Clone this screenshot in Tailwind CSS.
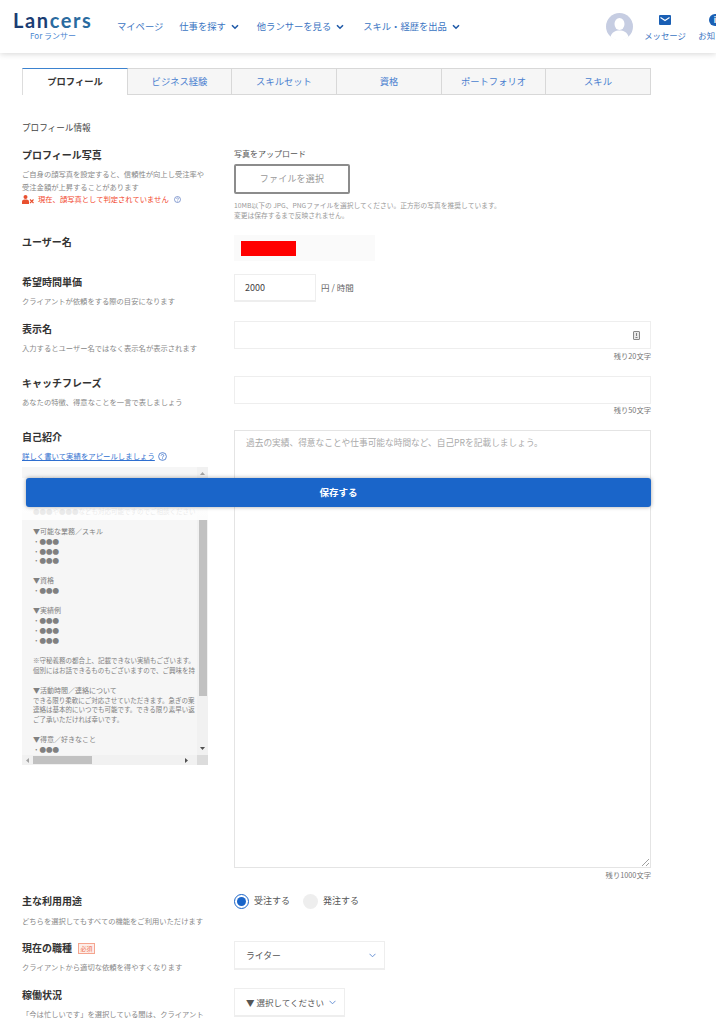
<!DOCTYPE html>
<html lang="ja">
<head>
<meta charset="UTF-8" />
<title>Lancers プロフィール</title>
<script src="https://cdn.jsdelivr.net/npm/@tailwindcss/browser@4"></script>
</head>
<body class="bg-white overflow-hidden font-['Noto_Sans_CJK_JP','Noto_Sans',sans-serif] text-[#333]">
<div class="relative w-[716px] h-[1024px] overflow-hidden">

  <!-- header -->
  <header class="h-[53px] bg-white shadow-[0_1px_6px_rgba(0,0,0,0.16)] flex items-center relative whitespace-nowrap">
    <div class="w-[117px] pl-[13px] flex flex-col items-start shrink-0">
      <div class="font-['Lato'] font-bold text-[20px] leading-[18px] tracking-[1.6px] mt-[-1px]"><span class="text-[#1b3d73]">Lan</span><span class="text-[#2a6b9f]">cers</span></div>
      <div class="text-[8px] leading-[12px] text-[#4a86d0] ml-[17px] mt-[1px]">For ランサー</div>
    </div>
    <nav class="flex items-center text-[9.3px] text-[#3a74c2] h-full">
      <span>マイページ</span>
      <span class="ml-[16px]">仕事を探す</span>
      <svg class="ml-[5px] w-[8px] h-[6px]" viewBox="0 0 8 6" fill="none"><path d="M1 1.2 4 4.2 7 1.2" stroke="#1f5aa8" stroke-width="1.6"/></svg>
      <span class="ml-[18px]">他ランサーを見る</span>
      <svg class="ml-[5px] w-[8px] h-[6px]" viewBox="0 0 8 6" fill="none"><path d="M1 1.2 4 4.2 7 1.2" stroke="#1f5aa8" stroke-width="1.6"/></svg>
      <span class="ml-[19px]">スキル・経歴を出品</span>
      <svg class="ml-[5px] w-[8px] h-[6px]" viewBox="0 0 8 6" fill="none"><path d="M1 1.2 4 4.2 7 1.2" stroke="#1f5aa8" stroke-width="1.6"/></svg>
    </nav>
    <svg class="absolute left-[606px] top-[13px] w-[27px] h-[27px]" viewBox="0 0 27 27">
      <circle cx="13.5" cy="13.5" r="13.5" fill="#c6cde2"/>
      <ellipse cx="13.5" cy="11" rx="5" ry="6" fill="#fff"/>
      <path d="M4.5 24c1-5 5-6.500 9-6.500s8 1.500 9 6.500a13.500 13.500 0 0 1-18 0z" fill="#fff"/>
    </svg>
    <div class="absolute left-[644px] top-[14px] w-[42px] flex flex-col items-center">
      <svg class="w-[12px] h-[10px] mt-[1px]" viewBox="0 0 12 10"><rect width="12" height="10" rx="1" fill="#1a5fb4"/><path d="M1.500 2.500 6 5.500 10.500 2.500" stroke="#fff" fill="none" stroke-width="1.100"/></svg>
      <span class="text-[8.4px] leading-[12px] text-[#3a74c2] mt-[4px]">メッセージ</span>
    </div>
    <div class="absolute left-[697px] top-[14px] w-[36px] flex flex-col items-center">
      <span class="w-[12px] h-[12px] rounded-full bg-[#1a5fb4] text-white text-[8px] leading-[12px] text-center font-bold">i</span>
      <span class="text-[8.4px] leading-[12px] text-[#3a74c2] mt-[3px]">お知らせ</span>
    </div>
  </header>

  <main class="px-[22px] w-[673px]">
    <!-- tabs -->
    <div class="mt-[15px] flex h-[27px] text-[9.300px] text-[#4a7fd0] w-[629px]">
      <div class="w-[106px] border-t border-t-[#3b82cf] border-l border-l-[#ddd] border-r border-r-[#d8d8d8] bg-white text-[#333] font-bold flex items-center justify-center">プロフィール</div>
      <div class="w-[104px] border-y border-r border-[#d8d8d8] bg-[#f6f6f6] flex items-center justify-center">ビジネス経験</div>
      <div class="w-[105px] border-y border-r border-[#d8d8d8] bg-[#f6f6f6] flex items-center justify-center">スキルセット</div>
      <div class="w-[105px] border-y border-r border-[#d8d8d8] bg-[#f6f6f6] flex items-center justify-center">資格</div>
      <div class="w-[104px] border-y border-r border-[#d8d8d8] bg-[#f6f6f6] flex items-center justify-center">ポートフォリオ</div>
      <div class="w-[105px] border-y border-r border-[#d8d8d8] bg-[#f6f6f6] flex items-center justify-center">スキル</div>
    </div>

    <h3 class="mt-[26px] text-[8.600px] leading-[12px] h-[12px] text-[#444]">プロフィール情報</h3>

    <!-- profile photo -->
    <section class="mt-[15px] h-[87px] grid grid-cols-[212px_417px]">
      <div>
        <h4 class="text-[10px] leading-[14px] font-bold">プロフィール写真</h4>
        <p class="mt-[6px] text-[7.300px] leading-[13px] text-[#888]">ご自身の顔写真を設定すると、信頼性が向上し受注率や<br>受注金額が上昇することがあります</p>
        <p class="-mt-[1px] text-[7.300px] leading-[13px] text-[#f2452a] flex items-center">
          <svg class="w-[12px] h-[9px] mr-[4px]" viewBox="0 0 12 9"><circle cx="3.500" cy="2" r="2" fill="#e8502f"/><path d="M0 9V6.500C0 5 1.500 4.500 3.500 4.500S7 5 7 6.500V9z" fill="#e8502f"/><path d="M8 4.500 11.500 8M11.500 4.500 8 8" stroke="#e8502f" stroke-width="1.100"/></svg>
          現在、顔写真として判定されていません
          <svg class="ml-[5px] w-[7px] h-[7px]" viewBox="0 0 7 7"><circle cx="3.500" cy="3.500" r="3" fill="none" stroke="#5a78c0" stroke-width="0.700"/><path d="M2.500 2.800C2.500 1.500 4.600 1.600 4.500 2.800 4.500 3.500 3.500 3.500 3.500 4.500" fill="none" stroke="#5a78c0" stroke-width="0.600"/><circle cx="3.500" cy="5.300" r="0.400" fill="#5a78c0"/></svg>
        </p>
      </div>
      <div>
        <p class="text-[8px] leading-[12px] text-[#555]">写真をアップロード</p>
        <button class="mt-[4px] w-[116px] h-[30px] rounded-[2px] border-2 border-[#8c8c8c] text-[9px] tracking-[0.200px] text-[#999]">ファイルを選択</button>
        <p class="mt-[6px] text-[6.750px] leading-[10px] text-[#999] whitespace-nowrap">10MB以下の JPG、PNGファイルを選択してください。正方形の写真を推奨しています。<br>変更は保存するまで反映されません。</p>
      </div>
    </section>

    <!-- user name -->
    <section class="h-[39px] grid grid-cols-[212px_417px]">
      <h4 class="text-[10px] leading-[14px] font-bold">ユーザー名</h4>
      <div class="w-[141px] h-[26px] bg-[#fafafa] pl-[7px] pt-[6px]"><div class="w-[55px] h-[15px] bg-[#ff0000]"></div></div>
    </section>

    <!-- hourly rate -->
    <section class="h-[47px] grid grid-cols-[212px_417px]">
      <div class="pt-[1px]">
        <h4 class="text-[10px] leading-[14px] font-bold">希望時間単価</h4>
        <p class="mt-[6px] text-[7.300px] leading-[12px] text-[#888]">クライアントが依頼をする際の目安になります</p>
      </div>
      <div class="flex items-start">
        <div class="w-[82px] h-[28px] border border-[#eee] border-b-2 text-[9px] leading-[26px] pl-[10px] text-[#444]">2000</div>
        <span class="ml-[5px] text-[8.500px] leading-[26px] text-[#666]">円 / 時間</span>
      </div>
    </section>

    <!-- display name -->
    <section class="h-[55px] grid grid-cols-[212px_417px]">
      <div class="pt-[1px]">
        <h4 class="text-[10px] leading-[14px] font-bold">表示名</h4>
        <p class="mt-[6px] text-[7.300px] leading-[12px] text-[#888]">入力するとユーザー名ではなく表示名が表示されます</p>
      </div>
      <div>
        <div class="h-[28px] border border-[#eee] flex items-center justify-end pr-[10px]">
          <svg class="w-[7px] h-[9px]" viewBox="0 0 7 9"><rect x="0.500" y="0.500" width="6" height="8" rx="0.500" fill="#e8e8e8" stroke="#888"/><path d="M3.500 2V5M2.500 6.500H4.500" stroke="#666" stroke-width="0.800"/></svg>
        </div>
        <p class="mt-[1px] text-right text-[7.300px] leading-[12px] text-[#777]">残り20文字</p>
      </div>
    </section>

    <!-- catch phrase -->
    <section class="h-[54px] grid grid-cols-[212px_417px]">
      <div>
        <h4 class="text-[10px] leading-[14px] font-bold">キャッチフレーズ</h4>
        <p class="mt-[6px] text-[7.300px] leading-[12px] text-[#888]">あなたの特徴、得意なことを一言で表しましょう</p>
      </div>
      <div>
        <div class="h-[28px] border border-[#eee]"></div>
        <p class="text-right text-[7.300px] leading-[12px] text-[#777]">残り50文字</p>
      </div>
    </section>

    <!-- self introduction -->
    <section class="h-[464px] grid grid-cols-[212px_417px]">
      <div>
        <h4 class="text-[10px] leading-[14px] font-bold">自己紹介</h4>
        <p class="mt-[6px] text-[7.400px] leading-[12px] text-[#2f6fd0] flex items-center"><span class="underline">詳しく書いて実績をアピールしましょう</span>
          <svg class="ml-[3px] w-[9px] h-[9px]" viewBox="0 0 9 9"><circle cx="4.500" cy="4.500" r="3.900" fill="none" stroke="#3a6fc8" stroke-width="0.800"/><path d="M3.200 3.600C3.200 2 5.800 2.100 5.700 3.600 5.600 4.500 4.500 4.500 4.500 5.600" fill="none" stroke="#3a6fc8" stroke-width="0.800"/><circle cx="4.500" cy="6.800" r="0.500" fill="#3a6fc8"/></svg>
        </p>
        <div class="relative mt-[5px] w-[186px] h-[298px] bg-[#f6f6f6] flex flex-col overflow-hidden text-[#808080]">
          <div class="flex-1 flex min-h-0">
            <div class="flex-1 overflow-hidden whitespace-nowrap pl-[11px] pt-[10px] text-[6.500px] leading-[9.930px]">
              <p class="h-[9.930px]">▼自己紹介</p>
              <p class="h-[9.930px]"></p>
              <p class="h-[9.930px]"></p>
              <p>●●●や●●●なども対応可能ですのでご相談ください</p>
              <p class="h-[9.930px]"></p>
              <p class="text-[7px]">▼可能な業務／スキル</p>
              <p>・●●●</p>
              <p>・●●●</p>
              <p>・●●●</p>
              <p class="h-[9.930px]"></p>
              <p class="text-[7px]">▼資格</p>
              <p>・●●●</p>
              <p class="h-[9.930px]"></p>
              <p class="text-[7px]">▼実績例</p>
              <p>・●●●</p>
              <p>・●●●</p>
              <p>・●●●</p>
              <p class="h-[9.930px]"></p>
              <p>※守秘義務の都合上、記載できない実績もございます。</p>
              <p>個別にはお話できるものもございますので、ご興味を持</p>
              <p class="h-[9.930px]"></p>
              <p class="text-[7px]">▼活動時間／連絡について</p>
              <p>できる限り柔軟にご対応させていただきます。急ぎの案</p>
              <p>連絡は基本的にいつでも可能です。できる限り素早い返</p>
              <p>ご了承いただければ幸いです。</p>
              <p class="h-[9.930px]"></p>
              <p class="text-[7px]">▼得意／好きなこと</p>
              <p>・●●●</p>
            </div>
            <div class="w-[11px] shrink-0 bg-[#f1f1f1] flex flex-col items-center">
              <svg class="w-[5px] h-[3px] mt-[5px]" viewBox="0 0 5 3"><path d="M0 3 2.500 0 5 3z" fill="#a3a3a3"/></svg>
              <div class="w-[8px] h-[176px] bg-[#c1c1c1] mt-[45px]"></div>
              <svg class="w-[5px] h-[3px] mt-auto mb-[5px]" viewBox="0 0 5 3"><path d="M0 0 2.500 3 5 0z" fill="#505050"/></svg>
            </div>
          </div>
          <div class="h-[10px] shrink-0 bg-[#f1f1f1] flex items-center text-[0px]">
            <svg class="ml-[4px] w-[3px] h-[5px]" viewBox="0 0 3 5"><path d="M3 0 0 2.500 3 5z" fill="#a3a3a3"/></svg>
            <div class="ml-[4px] w-[59px] h-[8px] bg-[#c1c1c1]"></div>
            <svg class="ml-[93px] w-[3px] h-[5px]" viewBox="0 0 3 5"><path d="M0 0 3 2.500 0 5z" fill="#505050"/></svg>
            <div class="ml-auto w-[11px] h-[10px] bg-[#dcdcdc]"></div>
          </div>
          <!-- fade under the save button -->
          <div class="absolute left-0 top-[11px] w-[186px] h-[42px] bg-gradient-to-b from-white to-white/80"></div>
        </div>
      </div>
      <div>
        <div class="relative h-[438px] border border-[#e4e4e4] pl-[11px] pt-[5px] text-[8.700px] leading-[14px] text-[#aaa]">
          過去の実績、得意なことや仕事可能な時間など、自己PRを記載しましょう。
          <svg class="absolute right-[1px] bottom-[1px] w-[7px] h-[7px]" viewBox="0 0 7 7"><path d="M0 7 7 0M4 7 7 4" stroke="#777" stroke-width="0.700"/></svg>
        </div>
        <p class="mt-[1px] text-right text-[7.300px] leading-[12px] text-[#777]">残り1000文字</p>
      </div>
    </section>

    <!-- usage -->
    <section class="h-[47px] grid grid-cols-[212px_417px]">
      <div>
        <h4 class="text-[10px] leading-[14px] font-bold">主な利用用途</h4>
        <p class="mt-[7px] text-[7.300px] leading-[12px] text-[#888]">どちらを選択してもすべての機能をご利用いただけます</p>
      </div>
      <div class="flex items-start text-[9px] leading-[14px] text-[#555]">
        <span class="w-[15px] h-[15px] rounded-full border-[1.500px] border-[#1a65c9] flex items-center justify-center"><span class="w-[9px] h-[9px] rounded-full bg-[#1a65c9]"></span></span>
        <span class="ml-[5px]">受注する</span>
        <span class="ml-[13px] w-[15px] h-[15px] rounded-full bg-[#eee]"></span>
        <span class="ml-[5px]">発注する</span>
      </div>
    </section>

    <!-- job -->
    <section class="h-[47px] grid grid-cols-[212px_417px]">
      <div>
        <h4 class="text-[10px] leading-[14px] font-bold flex items-center">現在の職種
          <span class="ml-[6px] w-[17px] h-[11px] border border-[#f5a58f] bg-[#fdeee9] text-[6px] leading-[9px] text-center font-normal text-[#ef7050]">必須</span>
        </h4>
        <p class="mt-[6px] text-[7.300px] leading-[12px] text-[#888]">クライアントから適切な依頼を得やすくなります</p>
      </div>
      <div class="w-[151px] h-[29px] border border-[#eee] border-b-2 flex items-center justify-between pl-[11px] pr-[8px] text-[8.800px] text-[#555]">
        <span class="mt-[1px]">ライター</span>
        <svg class="w-[7px] h-[5px]" viewBox="0 0 7 5" fill="none"><path d="M.5.800 3.500 3.800 6.500.800" stroke="#5a88d0" stroke-width="0.900"/></svg>
      </div>
    </section>

    <!-- status -->
    <section class="h-[47px] grid grid-cols-[212px_417px]">
      <div>
        <h4 class="text-[10px] leading-[14px] font-bold">稼働状況</h4>
        <p class="mt-[6px] text-[7.300px] leading-[12px] text-[#888]">「今は忙しいです」を選択している間は、クライアント</p>
      </div>
      <div class="w-[111px] h-[29px] border border-[#eee] border-b-2 flex items-center justify-between pl-[11px] pr-[8px] text-[8.500px] text-[#555] whitespace-nowrap">
        ▼ 選択してください
        <svg class="w-[7px] h-[5px] shrink-0" viewBox="0 0 7 5" fill="none"><path d="M.5.800 3.500 3.800 6.500.800" stroke="#5a88d0" stroke-width="0.900"/></svg>
      </div>
    </section>
  </main>

  <!-- fixed save bar -->
  <button class="absolute left-[26px] top-[478px] w-[625px] h-[29px] rounded-[3px] bg-[#1a65c9] shadow-[0_0_4px_rgba(0,0,0,0.35)] text-white text-[9.500px] font-bold">保存する</button>
</div>
</body>
</html>
